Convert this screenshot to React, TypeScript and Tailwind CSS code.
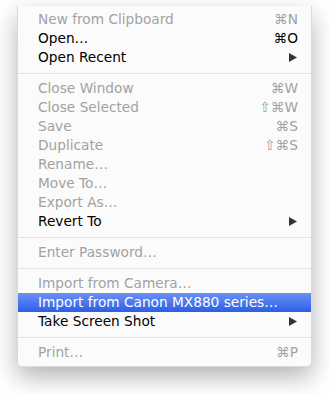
import React from "react";

type Item =
  | { sep: true }
  | { label: string; disabled?: boolean; shortcut?: React.ReactNode; submenu?: boolean; highlight?: boolean; sep?: false };

const items: Item[] = [
  { label: "New from Clipboard", disabled: true, shortcut: "⌘N" },
  { label: "Open…", shortcut: "⌘O" },
  { label: "Open Recent", submenu: true },
  { sep: true },
  { label: "Close Window", disabled: true, shortcut: "⌘W" },
  { label: "Close Selected", disabled: true, shortcut: "⇧⌘W" },
  { label: "Save", disabled: true, shortcut: "⌘S" },
  { label: "Duplicate", disabled: true, shortcut: "⇧⌘S" },
  { label: "Rename…", disabled: true },
  { label: "Move To…", disabled: true },
  { label: "Export As…", disabled: true },
  { label: "Revert To", submenu: true },
  { sep: true },
  { label: "Enter Password…", disabled: true },
  { sep: true },
  { label: "Import from Camera…", disabled: true },
  { label: "Import from Canon MX880 series…", highlight: true },
  { label: "Take Screen Shot", submenu: true },
  { sep: true },
  { label: "Print…", disabled: true, shortcut: "⌘P" },
];

function Arrow({ white }: { white?: boolean }) {
  return (
    <svg width="8" height="9" viewBox="0 0 8 9" className="mr-[1px]">
      <path d="M0 0 L8 4.5 L0 9 Z" fill={white ? "#fff" : "#333"} />
    </svg>
  );
}

export default function App() {
  return (
    <div className="w-[329px] h-[394px] bg-white relative overflow-hidden">
      <div
        className="absolute left-[17px] top-[6px] w-[295px] bg-[#fbfbfb] rounded-b-[5px] pt-[4px] pb-[4px] border border-t-0 border-[#dadada] shadow-[0_10px_24px_rgba(0,0,0,0.30)]"
        style={{ fontFamily: '"DejaVu Sans", "Liberation Sans", sans-serif' }}
      >
        {items.map((it, i) =>
          it.sep ? (
            <div key={i} className="h-[12px] flex items-center">
              <div className="h-px w-full bg-[#e2e2e2]" />
            </div>
          ) : (
            <div
              key={i}
              className={
                "h-[19px] flex items-center justify-between pl-[20px] pr-[13px] text-[13.7px] leading-none " +
                (it.highlight
                  ? "bg-gradient-to-b from-[#6a90f4] to-[#2b5ee8] text-white"
                  : it.disabled
                  ? "text-[#a2a2a2]"
                  : "text-black")
              }
            >
              <span>{it.label}</span>
              {it.submenu ? <Arrow white={it.highlight} /> : it.shortcut ? <span>{it.shortcut}</span> : null}
            </div>
          )
        )}
      </div>
    </div>
  );
}
